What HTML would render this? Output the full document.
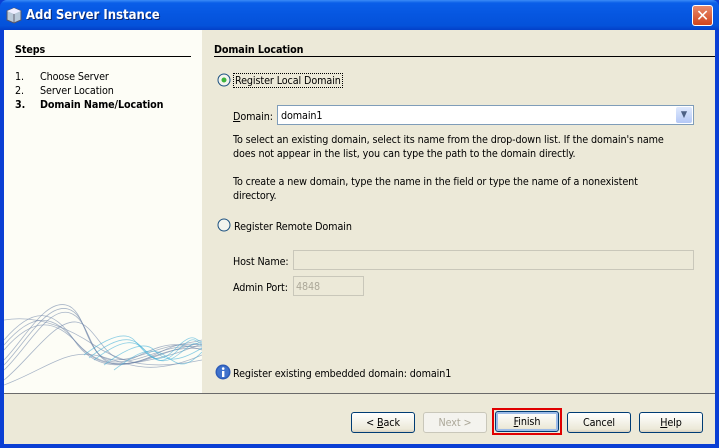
<!DOCTYPE html>
<html><head><style>
*{margin:0;padding:0;box-sizing:border-box}
body{width:719px;height:448px;overflow:hidden;font-family:"DejaVu Sans Condensed","DejaVu Sans",sans-serif;font-size:10.7px;letter-spacing:-0.1px;color:#000;background:#0a3fd4;position:relative}
.tb{position:absolute;left:0;top:0;width:719px;height:30px;background:linear-gradient(#3b8cf7 0,#0a5ee8 3px,#0656e0 50%,#0452da 85%,#0340c8 100%);border-radius:7px 7px 0 0}
.tt{position:absolute;left:26px;top:8px;color:#fff;font-weight:bold;font-size:13px;letter-spacing:0;text-shadow:1px 1px #0a246a}
.body{position:absolute;left:4px;top:30px;width:711px;height:414px;background:#ece9d8}
.left{position:absolute;left:0;top:0;width:198px;height:363px;background:#fdfdf6;overflow:hidden}
.a{position:absolute;white-space:nowrap;margin-top:1px}
.btn{position:absolute;top:382px;height:21px;width:64px;border:1px solid #003c74;border-radius:3px;background:linear-gradient(#fff,#ece9d8 85%,#d6d0c0);text-align:center;line-height:20px}
u{text-decoration:underline}
</style></head><body>
<div class="tb"></div>
<svg style="position:absolute;left:6px;top:7px" width="16" height="17"><polygon points="8,1 15,4 15,13 8,16 1,13 1,4" fill="#b8c8d8" stroke="#556" stroke-width="1"/><polygon points="8,1 15,4 8,7 1,4" fill="#eef"/><line x1="8" y1="7" x2="8" y2="16" stroke="#667"/></svg>
<div class="tt">Add Server Instance</div>
<div style="position:absolute;left:692px;top:5px;width:21px;height:21px;border:1px solid #fff;border-radius:3px;background:linear-gradient(#e88a6c,#d1441c);color:#fff;font-size:16px;font-weight:bold;text-align:center;line-height:19px;font-family:'DejaVu Sans'">✕</div>
<div class="body">
<div class="left">
<div class="a" style="left:11px;top:12px;font-weight:bold">Steps</div>
<div style="position:absolute;left:11px;top:26px;width:176px;height:1px;background:#000"></div>
<div class="a" style="left:11px;top:39px">1.</div><div class="a" style="left:36px;top:39px">Choose Server</div>
<div class="a" style="left:11px;top:53px">2.</div><div class="a" style="left:36px;top:53px">Server Location</div>
<div class="a" style="left:11px;top:67px;font-weight:bold">3.</div><div class="a" style="left:36px;top:67px;font-weight:bold">Domain Name/Location</div>
<svg style="position:absolute;left:0;top:270px" width="198" height="93" fill="none">
<g stroke="#6f86a8" stroke-opacity=".6" stroke-width=".8">
<path d="M0 40 C30 5 50 10 70 40 S120 70 150 55 S180 45 198 40"/>
<path d="M0 45 C30 10 50 15 72 42 S120 68 150 57 S180 48 198 42"/>
<path d="M0 50 C30 15 52 20 74 44 S120 66 150 59 S180 50 198 44"/>
<path d="M0 60 C20 40 40 0 62 5 S80 60 110 60 S160 40 198 45"/>
<path d="M0 65 C20 45 42 3 64 9 S82 62 112 62 S162 42 198 47"/>
<path d="M0 70 C22 50 44 6 66 13 S84 64 114 64 S164 44 198 49"/>
<path d="M0 80 C25 60 50 20 72 22 S102 72 132 57 S172 42 198 50"/>
<path d="M0 85 C40 70 60 50 90 55 S140 80 198 55"/>
<path d="M0 20 C30 15 60 25 90 45 S150 70 198 60"/>
</g>
<g stroke="#45b0d8" stroke-opacity=".6" stroke-width=".8">
<path d="M80 55 C100 40 120 30 130 40 S150 70 170 50 S190 40 198 42"/>
<path d="M85 58 C105 42 122 35 133 43 S152 72 172 52 S190 42 198 44"/>
<path d="M90 60 C110 45 125 38 136 46 S155 70 175 54 S190 44 198 46"/>
<path d="M100 65 C120 50 140 40 150 50 S170 65 198 48"/>
<path d="M110 70 C130 55 145 45 160 55 S180 70 198 52"/>
</g>
</svg>
</div>
<div style="position:absolute;left:0;top:363px;width:711px;height:1px;background:#6a6a6a"></div>
<div class="a" style="left:210px;top:12px;font-weight:bold">Domain Location</div>
<div style="position:absolute;left:210px;top:26px;width:501px;height:1px;background:#000"></div>
<svg style="position:absolute;left:213px;top:43px" width="14" height="14"><circle cx="7" cy="7" r="6" fill="#f4f4ee" stroke="#1c5180"/><circle cx="7" cy="7" r="2.5" fill="#3cb43c"/></svg>
<div class="a" style="left:229px;top:42px;border:1px dotted #000;padding:0 1px">Register Local Domain</div>
<div class="a" style="left:229px;top:79px"><u>D</u>omain:</div>
<div style="position:absolute;left:273px;top:75px;width:417px;height:20px;border:1px solid #7f9db9;background:#fff"><span style="position:absolute;left:3px;top:3px">domain1</span><div style="position:absolute;right:1px;top:1px;width:16px;height:16px;background:linear-gradient(#dfe9fd,#b4c8f6);border-radius:2px;color:#4d6185;font-size:9px;text-align:center;line-height:16px">▼</div></div>
<div class="a" style="left:229px;top:102px;line-height:14px">To select an existing domain, select its name from the drop-down list. If the domain's name<br>does not appear in the list, you can type the path to the domain directly.</div>
<div class="a" style="left:229px;top:144px;line-height:14px">To create a new domain, type the name in the field or type the name of a nonexistent<br>directory.</div>
<svg style="position:absolute;left:213px;top:188px" width="14" height="14"><circle cx="7" cy="7" r="6" fill="#f4f4ee" stroke="#1c5180"/></svg>
<div class="a" style="left:230px;top:189px">Register Remote Domain</div>
<div class="a" style="left:229px;top:224px">Host Name:</div>
<div style="position:absolute;left:289px;top:220px;width:401px;height:20px;border:1px solid #c9c7ba;background:#ece9d8"></div>
<div class="a" style="left:229px;top:250px">Admin Port:</div>
<div style="position:absolute;left:289px;top:246px;width:71px;height:20px;border:1px solid #c9c7ba;background:#ece9d8;color:#aca899;padding:3px 2px">4848</div>
<svg style="position:absolute;left:211px;top:334px" width="16" height="16"><circle cx="8" cy="8" r="7.5" fill="#2d5cb8"/><circle cx="8" cy="8" r="6" fill="#3f72cc"/><rect x="7" y="7" width="2.4" height="6" fill="#fff"/><circle cx="8.2" cy="4.6" r="1.3" fill="#fff"/></svg>
<div class="a" style="left:229px;top:336px">Register existing embedded domain: domain1</div>
<div class="btn" style="left:347px"><span>&lt; <u>B</u>ack</span></div>
<div class="btn" style="left:419px;border-color:#c9c7ba;color:#aca899;background:#f4f3ee">Next &gt;</div>
<div style="position:absolute;left:488px;top:378px;width:70px;height:27px;border:2px solid #e00000"></div>
<div class="btn" style="left:491px;top:381px;border-color:#003c74;box-shadow:inset 0 0 0 2px #9dbbe8"><u>F</u>inish</div>
<div class="btn" style="left:563px">Cancel</div>
<div class="btn" style="left:635px"><u>H</u>elp</div>
</div>
</body></html>
